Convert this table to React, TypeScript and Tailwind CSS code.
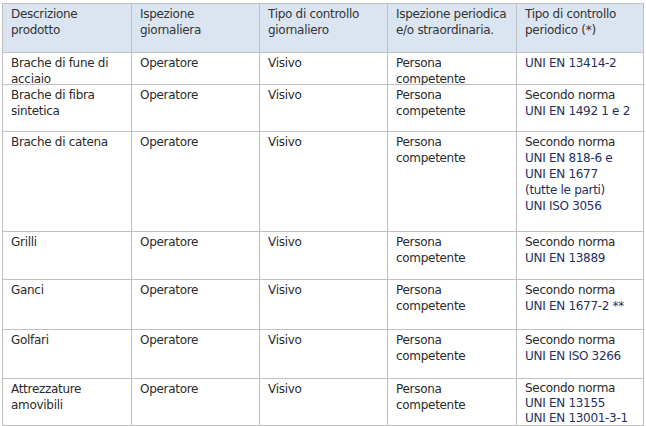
const NAVY = "text-[#1f3160]";

type Row = { name: string[]; norm: { text: string; navy?: boolean }[]; tight?: boolean };

const rows: Row[] = [
  { name: ["Brache di fune di", "acciaio"], norm: [{ text: "UNI EN 13414-2", navy: true }] },
  {
    name: ["Brache di fibra", "sintetica"],
    norm: [{ text: "Secondo norma" }, { text: "UNI EN 1492 1 e 2", navy: true }],
  },
  {
    name: ["Brache di catena"],
    norm: [
      { text: "Secondo norma" },
      { text: "UNI EN 818-6 e", navy: true },
      { text: "UNI EN 1677", navy: true },
      { text: "(tutte le parti)", navy: true },
      { text: "UNI ISO 3056", navy: true },
    ],
  },
  { name: ["Grilli"], norm: [{ text: "Secondo norma" }, { text: "UNI EN 13889", navy: true }] },
  { name: ["Ganci"], norm: [{ text: "Secondo norma" }, { text: "UNI EN 1677-2 **", navy: true }] },
  { name: ["Golfari"], norm: [{ text: "Secondo norma" }, { text: "UNI EN ISO 3266", navy: true }] },
  {
    name: ["Attrezzature", "amovibili"],
    tight: true,
    norm: [
      { text: "Secondo norma" },
      { text: "UNI EN 13155", navy: true },
      { text: "UNI EN 13001-3-1", navy: true },
    ],
  },
];

const headers = [
  ["Descrizione", "prodotto"],
  ["Ispezione", "giornaliera"],
  ["Tipo di controllo", "giornaliero"],
  ["Ispezione periodica", "e/o straordinaria."],
  ["Tipo di controllo", "periodico (*)"],
];

const Cell = ({ lines }: { lines: string[] }) => (
  <div className="bg-white pl-[8px] pt-[2px]">
    {lines.map((l, i) => (
      <div key={i}>{l}</div>
    ))}
  </div>
);

export default function App() {
  return (
    <div className="min-h-screen w-[646px] bg-white">
      <div
        className="ml-[2px] inline-grid grid-cols-[128px_127px_127px_128px_126px] grid-rows-[48px_31px_46px_99px_47px_49px_48px_46px] gap-px bg-[#c0c0c0] p-px text-[12px] leading-[16px] text-[#2a2a2a] tracking-[-0.3px]"
        style={{ fontFamily: '"DejaVu Sans", Verdana, sans-serif' }}
      >
        {headers.map((h, i) => (
          <div key={i} className="bg-[#dbe5f1] pl-[8px] pt-[2px] text-[#333]">
            {h.map((l, j) => (
              <div key={j}>{l}</div>
            ))}
          </div>
        ))}
        {rows.map((r, i) => (
          <div key={i} className="contents">
            <Cell lines={r.name} />
            <Cell lines={["Operatore"]} />
            <Cell lines={["Visivo"]} />
            <Cell lines={["Persona", "competente"]} />
            <div className={`bg-white pl-[8px] pt-[2px] ${r.tight ? "leading-[15px]" : ""}`}>
              {r.norm.map((n, j) => (
                <div key={j} className={n.navy ? NAVY : ""}>
                  {n.text}
                </div>
              ))}
            </div>
          </div>
        ))}
      </div>
    </div>
  );
}
